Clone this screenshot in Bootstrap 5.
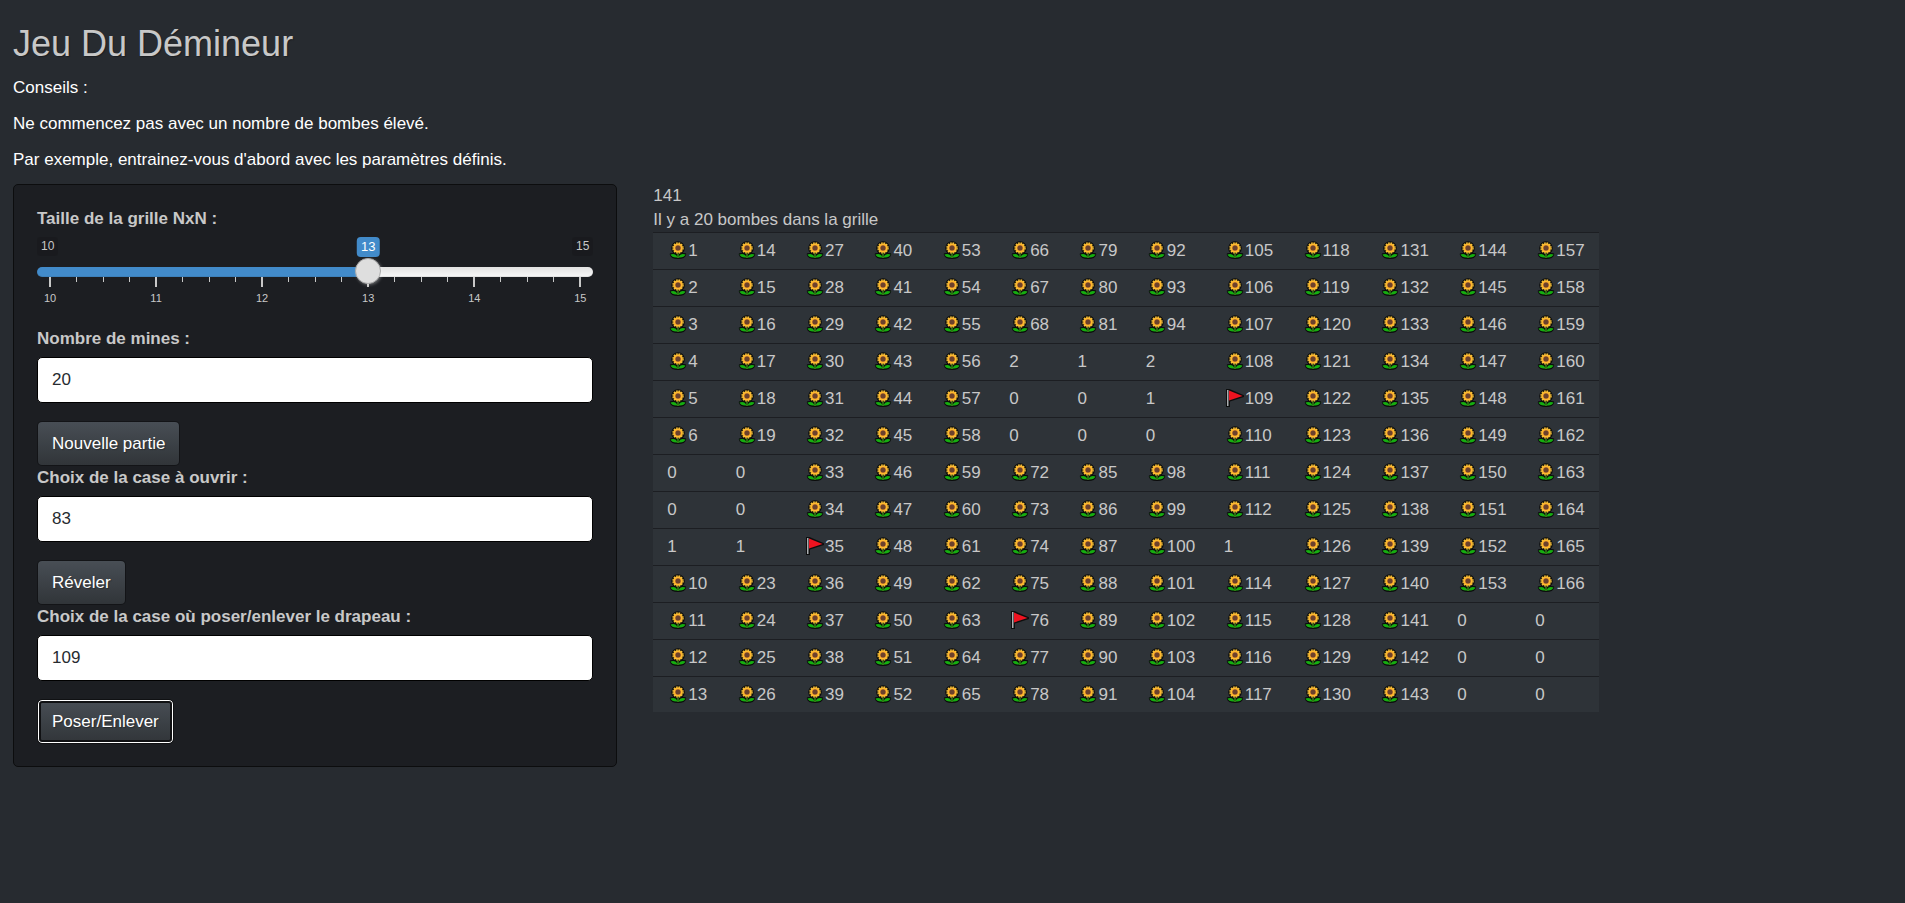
<!DOCTYPE html>
<html lang="fr">
<head>
<meta charset="utf-8">
<meta name="viewport" content="width=device-width, initial-scale=1">
<title>Jeu Du Démineur</title>
<link href="https://cdn.jsdelivr.net/npm/bootstrap@5.3.0/dist/css/bootstrap.min.css" rel="stylesheet">
<style>
  body { background: #272b30; color: #c8c8c8; font-family: "Liberation Sans", Arial, sans-serif; font-size: 17px; line-height: 24px; }
  .page { padding: 24px 7px 24px 13px; }
  .page .row { --bs-gutter-x: 36px; }
  h1 { font-size: 36px; line-height: 40px; font-weight: 400; margin: 0 0 12px; text-shadow: 1px 1px 1px rgba(0,0,0,.3); }
  .tips p { color: #fff; margin: 0 0 12px; }
  .well { background: #1c1e22; border: 1px solid #0c0d0e; border-radius: 5px; padding: 22px 23px; }
  .well label { display: block; font-weight: 700; line-height: 24px; margin-bottom: 6px; }
  .well .form-control { height: 46px; padding: 10px 14px; border: 1px solid #000; border-radius: 5px; background: #fff; color: #272b30; font-size: 17px; line-height: 24px; margin-bottom: 18px; }
  .btn-slate { display: block; padding: 10px 14px 9px; border: 1px solid rgba(0,0,0,.3); border-radius: 5px; background: linear-gradient(#484e55, #3a3f44 60%, #313539) padding-box; color: #fff; font-size: 17px; line-height: 24px; text-shadow: 1px 1px 1px rgba(0,0,0,.3); }
  .btn-slate:hover { color: #fff; background: #3a3f44; }
  .btn-slate.focused { border-color: #101113; box-shadow: inset 0 0 0 1px #fff, inset 0 0 0 3px #101113; }

  .slider { margin-bottom: 18px; height: 72px; }
  .slider-top { height: 22px; font-size: 12px; line-height: 18px; }
  .bound { background: rgba(0,0,0,.1); border-radius: 3px; padding: 0 4px; height: 19px; }
  .bubble { position: absolute; top: 0; left: calc(13px + (100% - 26px) * var(--pos)); transform: translateX(-50%); background: #428bca; color: #fff; font-size: 13px; line-height: 20px; padding: 0 4px; border-radius: 4px; }
  .slider input { -webkit-appearance: none; appearance: none; display: block; position: relative; z-index: 1; width: 100%; height: 26px; margin: 0; background: none; }
  .slider input::-webkit-slider-runnable-track { height: 10px; border-radius: 5px; background: linear-gradient(#428bca, #428bca) 0 0 / 60% 100% no-repeat, linear-gradient(#e2e2e2, #f8f8f8); box-shadow: inset 0 -1px 0 rgba(0,0,0,.08); }
  .slider input::-webkit-slider-thumb { -webkit-appearance: none; width: 26px; height: 26px; margin-top: -9px; border: 1px solid #ababab; border-radius: 50%; background: #dedede; box-shadow: 1px 1px 3px rgba(255,255,255,.3); }
  .ticks { margin-top: -8px; padding: 0 13px; font-size: 11px; line-height: 14px; }
  .tick { width: 0; }
  .tick i { flex: none; width: 1px; height: 5px; background: #c8c8c8; }
  .tick.major i { width: 2px; height: 10px; }
  .tick span { margin-top: 4px; }

  .board { width: 76%; color: inherit; margin: 0; border-top: 1px solid #1c1e22; }
  .board td { background: #2e3338; color: #c8c8c8; padding: 6px 14px; border: 0; border-bottom: 1px solid #1c1e22; white-space: nowrap; box-shadow: none; }
  .board tr:last-child td { padding-bottom: 5px; border-bottom: 0; }
  .board svg { width: 18px; height: 18px; margin: 0 1px 0 2px; vertical-align: -3px; }
</style>
</head>
<body>
<svg class="d-none" aria-hidden="true">
  <symbol id="flower" viewBox="0 0 18 18">
    <g fill="#0b0c0c" stroke="#0b0c0c" stroke-width="2" stroke-linejoin="round">
      <circle cx="9" cy="7" r="5.800"/>
      <path d="M1.800 13.300Q6.500 11.500 9 15Q11.500 11.500 16.200 13.300Q15.500 17 9 17Q2.500 17 1.800 13.300Z"/>
    </g>
    <circle cx="9" cy="7" r="4.800" fill="#ffb92e"/>
    <circle cx="9" cy="7" r="5.100" fill="none" stroke="#ffc83d" stroke-width="1.200" stroke-dasharray="1.700 .970"/>
    <circle cx="9" cy="7" r="3" fill="#d98a2c"/>
    <circle cx="9" cy="7" r="2.500" fill="#6b412d"/>
    <path d="M1.500 13.600Q6.500 11.800 8.700 16.500Q3 17.200 1.500 13.600ZM16.500 13.600Q11.500 11.800 9.300 16.500Q15 17.200 16.500 13.600Z" fill="#16ad10"/>
    <path d="M9 12.500V17" stroke="#4fc21b" stroke-width="1"/>
  </symbol>
  <symbol id="flag" viewBox="0 0 18 18">
    <path d="M0 0H3.500L18 6.200V8L4 12.600V18H0Z" fill="#0d0e0e"/>
    <path d="M3 1.600L16.500 7.100L3 11.500Z" fill="#ee1320"/>
    <path d="M1 1H2.500V17H1Z" fill="#a9adb0"/>
  </symbol>
</svg>

<main class="container-fluid page">
  <h1>Jeu Du Démineur</h1>
  <div class="tips">
    <p>Conseils :</p>
    <p>Ne commencez pas avec un nombre de bombes élevé.</p>
    <p>Par exemple, entrainez-vous d'abord avec les paramètres définis.</p>
  </div>
  <div class="row">
    <div class="col-4">
      <form class="well">
        <label for="size">Taille de la grille NxN :</label>
        <div class="slider">
          <div class="slider-top position-relative d-flex justify-content-between">
            <span class="bound">10</span>
            <output class="bubble" for="size" style="--pos: .6">13</output>
            <span class="bound">15</span>
          </div>
          <input type="range" id="size" min="10" max="15" value="13">
          <div class="ticks d-flex justify-content-between" id="ticks"></div>
        </div>
        <label for="mines">Nombre de mines :</label>
        <input type="number" class="form-control" id="mines" value="20">
        <button type="button" class="btn btn-slate">Nouvelle partie</button>
        <label for="open">Choix de la case à ouvrir :</label>
        <input type="number" class="form-control" id="open" value="83">
        <button type="button" class="btn btn-slate">Réveler</button>
        <label for="mark-cell">Choix de la case où poser/enlever le drapeau :</label>
        <input type="number" class="form-control" id="mark-cell" value="109">
        <button type="button" class="btn btn-slate focused">Poser/Enlever</button>
      </form>
    </div>
    <div class="col-8">
      <div>141</div>
      <div>Il y a 20 bombes dans la grille</div>
      <table class="table board"><tbody id="board"></tbody></table>
    </div>
  </div>
</main>

<script src="https://cdn.jsdelivr.net/npm/bootstrap@5.3.0/dist/js/bootstrap.bundle.min.js"></script>
<script>
  const size = 13;
  // Opened cells, by cell number, with their count of neighbouring bombs
  const opened = {7: 0, 8: 0, 9: 1, 20: 0, 21: 0, 22: 1, 69: 2, 70: 0, 71: 0, 82: 1, 83: 0, 84: 0,
    95: 2, 96: 1, 97: 0, 113: 1, 154: 0, 155: 0, 156: 0, 167: 0, 168: 0, 169: 0};
  const flags = [35, 76, 109];
  let html = '';
  for (let r = 1; r <= size; r++) {
    html += '<tr>';
    for (let c = 0; c < size; c++) {
      const n = c * size + r;
      html += '<td>' + (n in opened ? opened[n]
        : '<svg aria-hidden="true"><use href="#' + (flags.includes(n) ? 'flag' : 'flower') + '"/></svg>' + n) + '</td>';
    }
    html += '</tr>';
  }
  document.getElementById('board').innerHTML = html;

  let ticks = '';
  for (let i = 0; i <= 20; i++) {
    const major = i % 4 === 0;
    ticks += '<div class="tick d-flex flex-column align-items-center' + (major ? ' major' : '') + '"><i></i>'
      + (major ? '<span>' + (10 + i / 4) + '</span>' : '') + '</div>';
  }
  document.getElementById('ticks').innerHTML = ticks;
</script>
</body>
</html>
